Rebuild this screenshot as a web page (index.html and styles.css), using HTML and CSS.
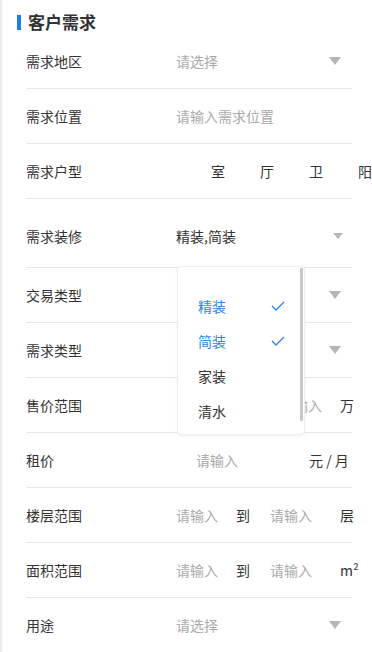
FILE: index.html
```html
<!DOCTYPE html>
<html lang="zh">
<head>
<meta charset="utf-8">
<title>客户需求</title>
<link rel="stylesheet" href="styles.css">
</head>
<body>
<div class="page">
  <div class="title"><span class="bar"></span><span class="title-text">客户需求</span></div>

  <div class="row">
    <div class="label">需求地区</div>
    <div class="value"><span class="ph">请选择</span><span class="tri"></span></div>
  </div>
  <div class="row">
    <div class="label">需求位置</div>
    <div class="value"><span class="ph">请输入需求位置</span></div>
  </div>
  <div class="row">
    <div class="label">需求户型</div>
    <div class="value rooms">
      <span class="slot"></span><span class="unit">室</span>
      <span class="slot"></span><span class="unit">厅</span>
      <span class="slot"></span><span class="unit">卫</span>
      <span class="slot"></span><span class="unit">阳</span>
    </div>
  </div>
  <div class="row row-tall">
    <div class="label">需求装修</div>
    <div class="value"><span class="txt">精装,简装</span><span class="tri tri-sm"></span></div>
  </div>
  <div class="row">
    <div class="label">交易类型</div>
    <div class="value"><span class="ph"></span><span class="tri"></span></div>
  </div>
  <div class="row">
    <div class="label">需求类型</div>
    <div class="value"><span class="ph"></span><span class="tri"></span></div>
  </div>
  <div class="row">
    <div class="label">售价范围</div>
    <div class="value"><span class="ph ph-sale">请输入</span><span class="unit-r">万</span></div>
  </div>
  <div class="row">
    <div class="label">租价</div>
    <div class="value"><span class="ph ph-rent">请输入</span><span class="unit-rent">元 / 月</span></div>
  </div>
  <div class="row">
    <div class="label">楼层范围</div>
    <div class="value range"><span class="ph">请输入</span><span class="to">到</span><span class="ph">请输入</span><span class="unit-end">层</span></div>
  </div>
  <div class="row">
    <div class="label">面积范围</div>
    <div class="value range"><span class="ph">请输入</span><span class="to">到</span><span class="ph">请输入</span><span class="unit-end">m²</span></div>
  </div>
  <div class="row row-last">
    <div class="label">用途</div>
    <div class="value"><span class="ph">请选择</span><span class="tri"></span></div>
  </div>

  <div class="dropdown">
    <div class="opt sel"><span>精装</span><svg class="check" viewBox="0 0 14 10" width="14" height="10"><path d="M1 5 L5 9 L13 1" fill="none" stroke="#2f86e6" stroke-width="1.3"/></svg></div>
    <div class="opt sel"><span>简装</span><svg class="check" viewBox="0 0 14 10" width="14" height="10"><path d="M1 5 L5 9 L13 1" fill="none" stroke="#2f86e6" stroke-width="1.3"/></svg></div>
    <div class="opt"><span>家装</span></div>
    <div class="opt"><span>清水</span></div>
    <div class="scrollbar"></div>
  </div>
</div>
</body>
</html>
```

FILE: styles.css
```css
html, body {
  margin: 0;
  padding: 0;
  background: #fff;
  overflow: hidden;
}
body {
  font-family: "Noto Sans CJK SC", "Noto Sans", "Liberation Sans", sans-serif;
  color: #333;
  width: 372px;
  height: 652px;
}
.page {
  position: relative;
  height: 652px;
  border-left: 2px solid #ececec;
  box-sizing: border-box;
  padding-left: 24px;
}
.title {
  display: flex;
  align-items: center;
  height: 24px;
  padding-top: 10px;
  margin-left: -9px;
}
.bar {
  width: 4px;
  height: 15px;
  background: #1a7cf0;
  margin-right: 7px;
}
.title-text {
  font-size: 17px;
  font-weight: bold;
  color: #333;
  line-height: 24px;
}
.row {
  display: flex;
  align-items: center;
  height: 54px;
  width: 326px;
  border-bottom: 1px solid #e6e6e6;
  font-size: 14px;
  line-height: 20px;
}
.row + .row { height: 54px; }
.row:first-of-type { height: 52px; }
.row-tall { height: 69px !important; padding-top: 5px; box-sizing: border-box; }
.row-last { border-bottom: none; }
.label {
  width: 150px;
  flex: none;
  color: #333;
}
.value {
  flex: 1;
  display: flex;
  align-items: center;
  white-space: nowrap;
}
.ph { color: #aaa; }
.txt { color: #333; }
.tri {
  margin-left: auto;
  margin-right: 11px;
  width: 0;
  height: 0;
  border-left: 6.5px solid transparent;
  border-right: 6.5px solid transparent;
  border-top: 8px solid #b5b5b5;
}
.tri-sm {
  margin-right: 9px;
  border-left-width: 5px;
  border-right-width: 5px;
  border-top-width: 6px;
  border-top-color: #b8b8b8;
}
.rooms .slot { width: 35px; flex: none; }
.rooms .unit { width: 14px; flex: none; color: #333; }
.ph-sale { margin-left: 104px; }
.unit-r { margin-left: 18px; }
.ph-rent { margin-left: 20px; }
.unit-rent { margin-left: 71px; }
.range .to { margin-left: 18px; color: #333; }
.range .to + .ph { margin-left: 20px; }
.unit-end { margin-left: 28px; color: #333; }

.dropdown {
  position: absolute;
  left: 175px;
  top: 266px;
  width: 128px;
  height: 169px;
  background: #fff;
  border: 1px solid #eee;
  border-radius: 4px;
  box-shadow: 0 1px 3px rgba(0,0,0,0.06);
  box-sizing: border-box;
  padding-top: 21px;
}
.opt {
  display: flex;
  align-items: center;
  height: 35px;
  padding-left: 20px;
  font-size: 14px;
  color: #333;
}
.opt.sel { color: #2f86e6; }
.check {
  margin-left: auto;
  margin-right: 19px;
}
.scrollbar {
  position: absolute;
  right: 1px;
  top: 1px;
  width: 3px;
  height: 153px;
  background: #c8c8c8;
  border-radius: 1px;
}
```
